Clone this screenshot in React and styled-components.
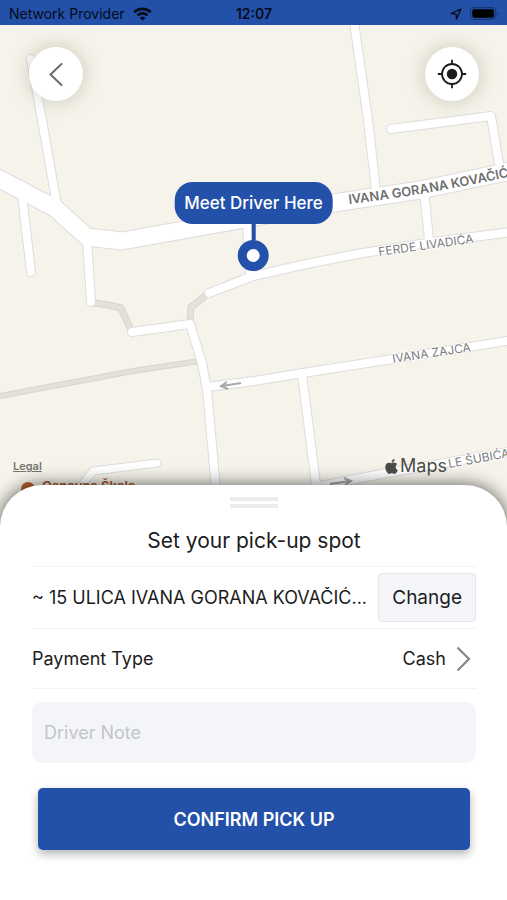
import React from "react";

import styled, { createGlobalStyle, ThemeProvider } from "styled-components";
import { FaApple } from "react-icons/fa";

const theme = {
    primaryColor: "#2350a9",
    textColor: "#1c1c1e",
    fieldColor: "#f3f5f9",
    lineColor: "#f3f3f5",
    landColor: "#f6f3eb",
};

const GlobalStyle = createGlobalStyle`
    * {
        box-sizing: border-box;
    }

    body {
        margin: 0;
        font-family: Inter, "Liberation Sans", sans-serif;
        color: ${theme.textColor};
        background-color: white;
    }

    button,
    input {
        font-family: inherit;
        color: inherit;
    }
`;

const Screen = styled.div`
    display: flex;
    flex-direction: column;
    min-height: 100vh;
`;

const StatusBar = styled.header`
    display: grid;
    grid-template-columns: 1fr auto 1fr;
    align-items: center;
    height: 25px;
    padding: 2px 8px 0 9px;
    font-size: 14px;
    color: #060b18;
    background-color: ${(props) => props.theme.primaryColor};
`;

const StatusGroup = styled.div`
    display: flex;
    align-items: center;
    justify-content: ${(props) => (props.$end ? "flex-end" : "flex-start")};
    gap: 8px;
`;

const Clock = styled.time`
    font-weight: 600;
`;

const MapArea = styled.main`
    position: relative;
    flex: 1;
    display: flex;
    flex-direction: column;
    justify-content: space-between;
    min-height: 360px;
    overflow: hidden;
    background-color: ${(props) => props.theme.landColor};
`;

const MapDrawing = styled.svg`
    position: absolute;
    inset: 0;
    width: 100%;
    height: 100%;
`;

const Road = styled.path`
    fill: none;
    stroke: ${(props) => props.$color};
    stroke-width: ${(props) => props.$width}px;
    stroke-linecap: round;
    stroke-linejoin: round;
`;

const RoadLabel = styled.text`
    font-size: ${(props) => (props.$main ? 13 : 12)}px;
    font-weight: ${(props) => (props.$main ? 600 : 400)};
    fill: ${(props) => (props.$main ? "#6f6f6f" : "#7c7c7c")};
    stroke: white;
    stroke-width: 2px;
    paint-order: stroke;
`;

const PlaceLabel = styled.text`
    font-size: 13px;
    font-weight: 600;
    fill: #a4562f;
`;

const MapControls = styled.div`
    position: relative;
    display: flex;
    justify-content: space-between;
    padding: 22px 28px 22px 29px;
`;

const RoundButton = styled.button`
    display: flex;
    align-items: center;
    justify-content: center;
    width: 54px;
    height: 54px;
    padding: 0;
    border: none;
    border-radius: 50%;
    background-color: white;
    box-shadow: 0 0 20px rgba(90, 90, 50, 0.3);
`;

const Pin = styled.div`
    position: absolute;
    top: 157px;
    left: 50%;
    display: flex;
    flex-direction: column;
    align-items: center;
    transform: translateX(-50%);
`;

const PinLabel = styled.div`
    padding: 0 10px;
    border-radius: 18px;
    font-size: 17px;
    font-weight: 500;
    line-height: 42px;
    white-space: nowrap;
    color: white;
    background-color: ${(props) => props.theme.primaryColor};
`;

const PinStem = styled.div`
    width: 4px;
    height: 16px;
    background-color: ${(props) => props.theme.primaryColor};
`;

const PinDot = styled.div`
    width: 31px;
    height: 31px;
    border: 9px solid ${(props) => props.theme.primaryColor};
    border-radius: 50%;
    background-color: white;
`;

const MapFooter = styled.div`
    position: relative;
    display: flex;
    align-items: center;
    justify-content: space-between;
    padding: 0 60px 49px 13px;
    line-height: 20px;
`;

const LegalLink = styled.a`
    font-size: 11px;
    font-weight: 600;
    color: #777671;
`;

const MapBrand = styled.div`
    display: flex;
    align-items: center;
    font-size: 18px;
    color: #4d4c49;
`;

const Sheet = styled.section`
    position: relative;
    display: flex;
    flex-direction: column;
    margin-top: -40px;
    padding: 12px 31px 50px 32px;
    border-radius: 42px 42px 0 0;
    background-color: white;
    box-shadow: 0 0 18px rgba(0, 0, 0, 0.65);
`;

const Handle = styled.div`
    align-self: center;
    width: 48px;
    height: 11px;
    border: solid #ececec;
    border-width: 4px 0;
`;

const Title = styled.h1`
    margin: 19px 0 11px;
    font-size: 21px;
    font-weight: 400;
    line-height: 28px;
    text-align: center;
`;

const Row = styled.div`
    display: flex;
    align-items: center;
    justify-content: space-between;
    gap: 12px;
    height: ${(props) => (props.$tall ? 62 : 60)}px;
    border-top: 1px solid ${(props) => props.theme.lineColor};
    font-size: 18px;
`;

const Address = styled.span`
    min-width: 0;
    overflow: hidden;
    white-space: nowrap;
`;

const ChangeButton = styled.button`
    flex: none;
    height: 49px;
    padding: 0 13px;
    border: 1px solid #e6e8ec;
    border-radius: 4px;
    font-size: 19px;
    background-color: ${(props) => props.theme.fieldColor};
`;

const PaymentButton = styled.button`
    display: flex;
    align-items: center;
    gap: 10px;
    padding: 0 5px 0 0;
    border: none;
    font-size: 18px;
    background-color: transparent;
`;

const NoteForm = styled.form`
    display: flex;
    flex-direction: column;
    padding-top: 13px;
    border-top: 1px solid ${(props) => props.theme.lineColor};
`;

const NoteInput = styled.input`
    height: 61px;
    padding: 0 12px;
    border: none;
    border-radius: 10px;
    font-size: 18px;
    background-color: ${(props) => props.theme.fieldColor};

    &::placeholder {
        color: #c4c5c9;
        opacity: 1;
    }
`;

const ConfirmButton = styled.button`
    height: 62px;
    margin: 25px 6px 0;
    border: none;
    border-radius: 5px;
    font-size: 18px;
    font-weight: 600;
    color: white;
    background-color: ${(props) => props.theme.primaryColor};
    box-shadow: 0 4px 10px rgba(0, 0, 0, 0.3);
`;

const footpaths = [
    { d: "M94 303 L108 305 L121 308 L131 330", width: 6 },
    { d: "M190 322 L191 307 L209 293", width: 6 },
    { d: "M-5 397 L133 371 L200 361", width: 5 },
];

const roads = [
    { d: "M31 59 L42 120 L57 205", width: 8 },
    { d: "M22 195 L31 272", width: 8 },
    { d: "M87 240 L91 302", width: 8 },
    { d: "M132 332 L190 324 L202 363 L207 390 L217 500", width: 8 },
    { d: "M247 225 L250 274", width: 8 },
    { d: "M209 293 L253 276 L311 263 L363 253 L433 242 L520 231", width: 8 },
    { d: "M353 15 L368 120 L376 190", width: 8 },
    { d: "M391 129 L491 116 L500 170", width: 8 },
    { d: "M424 190 L429 240", width: 8 },
    { d: "M207 387 L254 381 L303 373 L386 360 L520 339", width: 8 },
    { d: "M302 374 L318 500", width: 8 },
    { d: "M316 487 L386 473 L520 450", width: 8 },
    { d: "M157 463 L93 471 L78 490", width: 7 },
    { d: "M-10 174 L55 208 L87 237 L122 241 L334 203 L420 190 L520 169", width: 17 },
];

const labels = [
    { id: "kovacica", d: "M349 204 Q430 195 540 170", text: "IVANA GORANA KOVAČIĆ", main: true },
    { id: "livadica", d: "M379 256 L500 239", text: "FERDE LIVADIĆA" },
    { id: "zajca", d: "M393 363 L500 347", text: "IVANA ZAJCA" },
    { id: "subica", d: "M449 468 L560 448", text: "LE ŠUBIĆA" },
];

const StreetMap = () => (
    <MapDrawing viewBox="0 25 507 500" preserveAspectRatio="xMidYMin slice">
        {footpaths.map(({ d, width }) => (
            <Road key={d} d={d} $color="#d6d5cd" $width={width + 1} />
        ))}
        {footpaths.map(({ d, width }) => (
            <Road key={d} d={d} $color="#e3e2da" $width={width - 1} />
        ))}
        {roads.map(({ d, width }) => (
            <Road key={d} d={d} $color="#dddddc" $width={width + 2} />
        ))}
        {roads.map(({ d, width }) => (
            <Road key={d} d={d} $color="white" $width={width} />
        ))}
        <g fill="none" stroke="#a9a9a9" strokeWidth="2">
            <path d="M241 383 L222 386 M227 382 L221 386 L228 389" />
            <path d="M330 484 L350 481 M344 478 L351 481 L345 485" />
        </g>
        {labels.map(({ id, d, text, main }) => (
            <React.Fragment key={id}>
                <path id={id} d={d} fill="none" />
                <RoadLabel $main={main}>
                    <textPath href={`#${id}`}>{text}</textPath>
                </RoadLabel>
            </React.Fragment>
        ))}
        <circle cx="28" cy="489" r="7" fill="#b4622f" />
        <PlaceLabel x="42" y="491">
            Osnovna Škola
        </PlaceLabel>
    </MapDrawing>
);

const WifiIcon = () => (
    <svg width="19" height="14" viewBox="0 0 19 14" fill="none" stroke="currentColor" strokeWidth="2.6">
        <path d="M1.2 5.2 C5.8 0.7 13.2 0.7 17.8 5.2" />
        <path d="M4.4 8.4 C7.3 5.7 11.7 5.7 14.6 8.4" />
        <path d="M9.5 13.6 L6.6 10.7 C8.2 9.3 10.8 9.3 12.4 10.7 Z" fill="currentColor" stroke="none" />
    </svg>
);

const LocationIcon = () => (
    <svg width="12" height="12" viewBox="0 0 12 12" fill="none" stroke="currentColor" strokeWidth="1.3" strokeLinejoin="round">
        <path d="M11 1 L1 5.6 L6 6.1 L6.5 11 Z" />
    </svg>
);

const BatteryIcon = () => (
    <svg width="29" height="13" viewBox="0 0 29 13">
        <rect x="0.6" y="0.6" width="25" height="11.8" rx="3.6" fill="none" stroke="#173673" strokeWidth="1.1" />
        <rect x="2.3" y="2.2" width="21.6" height="8.6" rx="2" fill="black" />
        <path d="M27 4.4 C28.6 5.2 28.6 7.8 27 8.6 Z" fill="#173673" />
    </svg>
);

const BackIcon = () => (
    <svg width="14" height="24" viewBox="0 0 14 24" fill="none" stroke="#6c6c6c" strokeWidth="2" strokeLinecap="round">
        <path d="M12.5 2 L1.5 12.5 L12.5 23" />
    </svg>
);

const TargetIcon = () => (
    <svg width="30" height="30" viewBox="0 0 30 30" fill="none" stroke="#1d1d1d" strokeWidth="1.8">
        <circle cx="15" cy="15" r="10" />
        <circle cx="15" cy="15" r="5.2" fill="#1d1d1d" stroke="none" />
        <path d="M15 0.8 V5 M15 25 V29.2 M0.8 15 H5 M25 15 H29.2" />
    </svg>
);

const ChevronIcon = () => (
    <svg width="15" height="26" viewBox="0 0 15 26" fill="none" stroke="#858585" strokeWidth="2.2">
        <path d="M1.5 1.5 L13 13 L1.5 24.5" />
    </svg>
);

const App = () => {
    return (
        <ThemeProvider theme={theme}>
            <GlobalStyle />
            <Screen>
                <StatusBar>
                    <StatusGroup>
                        Network Provider
                        <WifiIcon />
                    </StatusGroup>
                    <Clock>12:07</Clock>
                    <StatusGroup $end>
                        <LocationIcon />
                        <BatteryIcon />
                    </StatusGroup>
                </StatusBar>
                <MapArea>
                    <StreetMap />
                    <MapControls>
                        <RoundButton type="button" aria-label="Back">
                            <BackIcon />
                        </RoundButton>
                        <RoundButton type="button" aria-label="My location">
                            <TargetIcon />
                        </RoundButton>
                    </MapControls>
                    <Pin>
                        <PinLabel>Meet Driver Here</PinLabel>
                        <PinStem />
                        <PinDot />
                    </Pin>
                    <MapFooter>
                        <LegalLink href="#legal">Legal</LegalLink>
                        <MapBrand>
                            <FaApple size={17} />
                            Maps
                        </MapBrand>
                    </MapFooter>
                </MapArea>
                <Sheet>
                    <Handle />
                    <Title>Set your pick-up spot</Title>
                    <Row $tall>
                        <Address>~ 15 ULICA IVANA GORANA KOVAČIĆ...</Address>
                        <ChangeButton type="button">Change</ChangeButton>
                    </Row>
                    <Row>
                        <span id="payment-type">Payment Type</span>
                        <PaymentButton type="button" aria-describedby="payment-type">
                            Cash
                            <ChevronIcon />
                        </PaymentButton>
                    </Row>
                    <NoteForm onSubmit={(e) => e.preventDefault()}>
                        <NoteInput type="text" placeholder="Driver Note" aria-label="Driver Note" />
                        <ConfirmButton type="submit">CONFIRM PICK UP</ConfirmButton>
                    </NoteForm>
                </Sheet>
            </Screen>
        </ThemeProvider>
    );
};

export default App;
